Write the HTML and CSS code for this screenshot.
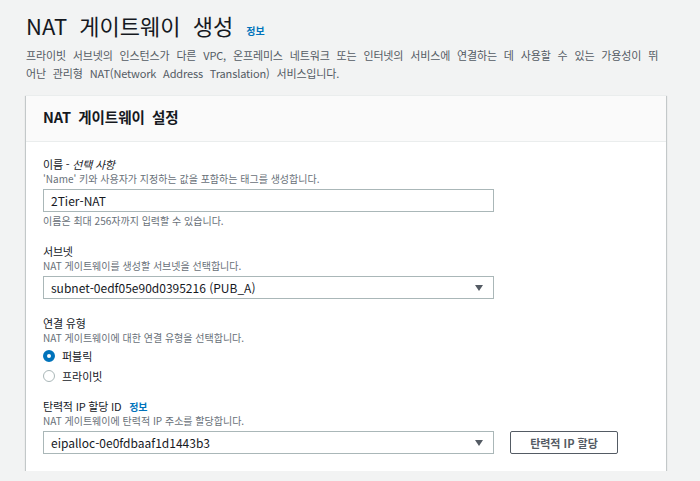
FILE: index.html
```html
<!DOCTYPE html>
<html lang="ko">

<head>
    <meta charset="UTF-8">
    <meta name="viewport" content="width=device-width, initial-scale=1.0">
    <title>NAT 게이트웨이 생성</title>
    <link rel="stylesheet" href="styles.css">
</head>

<body>
    <div class="page">
        <h1 class="page-title">NAT 게이트웨이 생성 <a class="info-link">정보</a></h1>
        <p class="page-desc">프라이빗 서브넷의 인스턴스가 다른 VPC, 온프레미스 네트워크 또는 인터넷의 서비스에 연결하는 데 사용할 수 있는 가용성이 뛰어난 관리형 NAT(Network Address Translation) 서비스입니다.</p>

        <section class="card">
            <div class="card-head">
                <h2>NAT 게이트웨이 설정</h2>
            </div>
            <div class="card-body">

                <!-- 이름 -->
                <div class="field">
                    <div class="field-label">이름 - <i>선택 사항</i></div>
                    <div class="field-desc">'Name' 키와 사용자가 지정하는 값을 포함하는 태그를 생성합니다.</div>
                    <input class="text-input" type="text" value="2Tier-NAT">
                    <div class="field-hint">이름은 최대 256자까지 입력할 수 있습니다.</div>
                </div>

                <!-- 서브넷 -->
                <div class="field">
                    <div class="field-label">서브넷</div>
                    <div class="field-desc">NAT 게이트웨이를 생성할 서브넷을 선택합니다.</div>
                    <div class="select">
                        <span>subnet-0edf05e90d0395216 (PUB_A)</span>
                        <svg class="caret" width="8" height="6" viewBox="0 0 8 6"><path d="M0 0h8L4 6z" /></svg>
                    </div>
                </div>

                <!-- 연결 유형 -->
                <div class="field">
                    <div class="field-label">연결 유형</div>
                    <div class="field-desc">NAT 게이트웨이에 대한 연결 유형을 선택합니다.</div>
                    <div class="radio-group">
                        <label class="radio"><span class="radio-dot checked"></span>퍼블릭</label>
                        <label class="radio"><span class="radio-dot"></span>프라이빗</label>
                    </div>
                </div>

                <!-- 탄력적 IP -->
                <div class="field field-eip">
                    <div class="field-label">탄력적 IP 할당 ID <a class="info-link">정보</a></div>
                    <div class="field-desc">NAT 게이트웨이에 탄력적 IP 주소를 할당합니다.</div>
                    <div class="row">
                        <div class="select">
                            <span>eipalloc-0e0fdbaaf1d1443b3</span>
                            <svg class="caret" width="8" height="6" viewBox="0 0 8 6"><path d="M0 0h8L4 6z" /></svg>
                        </div>
                        <button class="btn">탄력적 IP 할당</button>
                    </div>
                </div>

            </div>
        </section>
    </div>
</body>

</html>
```

FILE: styles.css
```css
* {
    margin: 0;
    padding: 0;
    box-sizing: border-box;
}

body {
    background: #f2f3f3;
    color: #16191f;
    font-family: "Noto Sans CJK KR", sans-serif;
}

.page {
    padding: 0 34px 0 26px;
}

.page-title {
    margin-top: 10px;
    font-size: 22px;
    line-height: 30px;
    font-weight: 400;
    word-spacing: 6px;
}

.info-link {
    color: #0073bb;
    font-size: 10px;
    line-height: 1;
    font-weight: 700;
    margin-left: 1px;
    word-spacing: 0;
}

.page-desc {
    margin-top: 6px;
    width: 634px;
    font-size: 11px;
    letter-spacing: -0.15px;
    word-spacing: 4px;
    line-height: 18px;
    color: #545b64;
}

.card {
    margin-top: 13px;
    width: 640px;
    background: #fff;
    box-shadow: 0 1px 1px 0 rgba(0, 28, 36, 0.3), 1px 1px 1px 0 rgba(0, 28, 36, 0.15), -1px 1px 1px 0 rgba(0, 28, 36, 0.15);
    border-top: 1px solid #eaeded;
}

.card-head {
    background: #fafafa;
    border-bottom: 1px solid #eaeded;
    padding: 10px 17px 13px;
}

.card-head h2 {
    font-size: 14.5px;
    line-height: 22px;
    font-weight: 700;
    word-spacing: 3px;
}

.card-body {
    padding: 14px 17px 17px;
}

.field {
    margin-top: 16px;
}

.field:first-child {
    margin-top: 0;
}

.field-eip {
    margin-top: 12px;
}

.field-label {
    font-size: 11px;
    letter-spacing: -0.2px;
    line-height: 16px;
}

.field-label i {
    font-style: italic;
}

.field-label .info-link {
    margin-left: 5px;
}

.field-desc,
.field-hint {
    font-size: 10px;
    line-height: 13px;
    color: #687078;
}

.field-hint {
    margin-top: 2px;
}

.text-input,
.select {
    display: flex;
    align-items: center;
    margin-top: 4px;
    width: 451px;
    height: 23px;
    border: 1px solid #aab7b8;
    background: #fff;
    padding: 0 10px 0 7px;
    font-family: "Noto Sans CJK KR", sans-serif;
    font-size: 12px;
    color: #16191f;
}

.select {
    justify-content: space-between;
}

.caret {
    fill: #545b64;
}

.radio-group {
    margin-top: 2px;
}

.radio {
    display: flex;
    align-items: center;
    height: 20px;
    font-size: 11px;
}

.radio-dot {
    width: 12px;
    height: 12px;
    border-radius: 50%;
    border: 1px solid #aab7b8;
    background: #fff;
    margin-right: 7px;
}

.radio-dot.checked {
    border: 4px solid #0073bb;
}

.row {
    display: flex;
    align-items: flex-end;
}

.btn {
    margin-left: 16px;
    width: 108px;
    height: 23px;
    border: 1px solid #545b64;
    border-radius: 2px;
    background: #fff;
    color: #545b64;
    font-family: "Noto Sans CJK KR", sans-serif;
    font-size: 11px;
    font-weight: 700;
}
```
